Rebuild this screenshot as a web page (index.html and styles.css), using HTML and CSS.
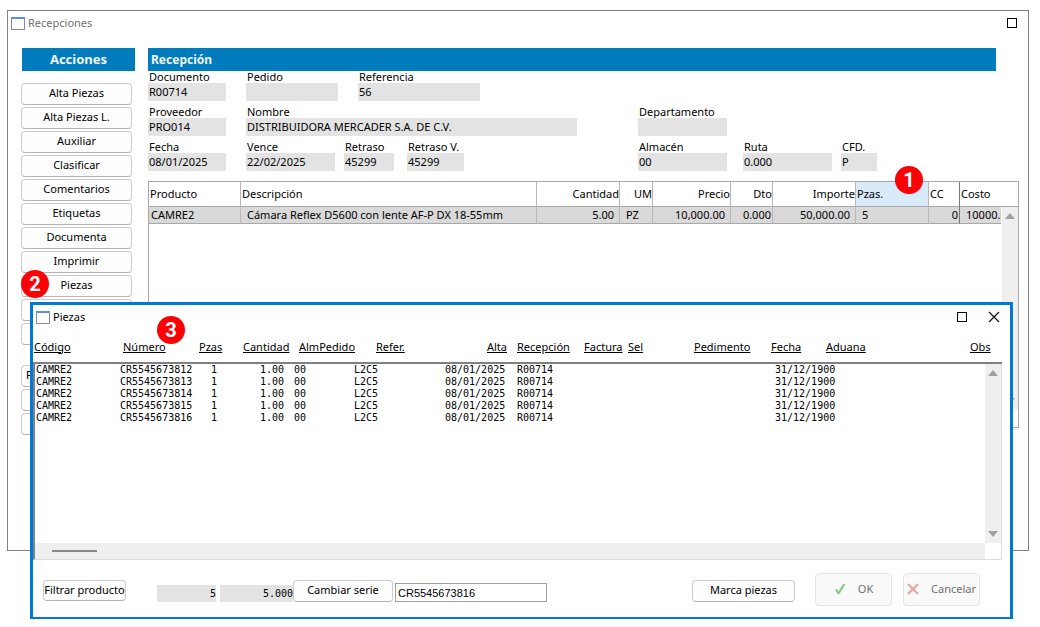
FILE: index.html
```html
<!DOCTYPE html>
<html lang="es">
<head>
<meta charset="utf-8">
<title>Recepciones</title>
<link rel="stylesheet" href="styles.css">
</head>
<body>
<div class="desktop">
  <main class="window">
    <header class="titlebar">
      <span class="app-icon"></span>
      <h1 class="title">Recepciones</h1>
      <button class="maximize" type="button" aria-label="Maximizar"></button>
    </header>
    <div class="window-body">
      <nav class="actions">
        <h2 class="band band-center">Acciones</h2>
        <div class="action-list">
          <button class="button" type="button">Alta Piezas</button>
          <button class="button" type="button">Alta Piezas L.</button>
          <button class="button" type="button">Auxiliar</button>
          <button class="button" type="button">Clasificar</button>
          <button class="button" type="button">Comentarios</button>
          <button class="button" type="button">Etiquetas</button>
          <button class="button" type="button">Documenta</button>
          <button class="button" type="button">Imprimir</button>
          <button class="button" type="button">Piezas</button>
          <button class="button" type="button"></button>
          <button class="button" type="button"></button>
        </div>
        <div class="action-list action-list-more">
          <button class="button button-start" type="button">F</button>
          <button class="button" type="button"></button>
          <button class="button" type="button"></button>
        </div>
      </nav>
      <section class="reception">
        <h2 class="band">Recepción</h2>
        <form class="form">
          <div class="group">
            <div class="row row-document">
              <label class="field">Documento<input readonly value="R00714"></label>
              <label class="field">Pedido<input readonly value=""></label>
              <label class="field">Referencia<input readonly value="56"></label>
            </div>
            <div class="row row-supplier">
              <label class="field">Proveedor<input readonly value="PRO014"></label>
              <label class="field">Nombre<input readonly value="DISTRIBUIDORA MERCADER S.A. DE C.V."></label>
            </div>
            <div class="row row-dates">
              <label class="field">Fecha<input readonly value="08/01/2025"></label>
              <label class="field">Vence<input readonly value="22/02/2025"></label>
              <label class="field">Retraso<input readonly value="45299"></label>
              <label class="field">Retraso V.<input readonly value="45299"></label>
            </div>
          </div>
          <div class="group group-end">
            <div class="row row-department">
              <label class="field">Departamento<input readonly value=""></label>
            </div>
            <div class="row row-store">
              <label class="field">Almacén<input readonly value="00"></label>
              <label class="field">Ruta<input readonly value="0.000"></label>
              <label class="field">CFD.<input readonly value="P"></label>
            </div>
          </div>
        </form>
        <div class="lines">
          <table class="lines-table">
            <colgroup>
              <col class="c-product"><col><col class="c-qty"><col class="c-um"><col class="c-price">
              <col class="c-dto"><col class="c-amount"><col class="c-pieces"><col class="c-cc"><col class="c-cost">
            </colgroup>
            <thead>
              <tr><th>Producto</th><th>Descripción</th><th class="num">Cantidad</th><th class="num">UM</th><th class="num">Precio</th><th class="num">Dto</th><th class="num">Importe</th><th class="active">Pzas.</th><th class="dark">CC</th><th>Costo</th></tr>
            </thead>
            <tbody>
              <tr><td>CAMRE2</td><td class="indent">Cámara Reflex D5600 con lente AF-P DX 18-55mm</td><td class="num">5.00</td><td class="indent">PZ</td><td class="num">10,000.00</td><td class="num tight">0.000</td><td class="num">50,000.00</td><td class="indent">5</td><td class="num tight dark">0</td><td class="indent">10000.00</td></tr>
            </tbody>
          </table>
          <div class="lines-scroll"><span class="arrow arrow-up"></span><span class="arrow arrow-down"></span></div>
        </div>
      </section>
    </div>
    <span class="badge badge-one">1</span>
    <span class="badge badge-two">2</span>
  </main>

  <section class="dialog" role="dialog" aria-labelledby="dialog-title">
    <header class="titlebar dialog-titlebar">
      <span class="app-icon"></span>
      <h2 class="title" id="dialog-title">Piezas</h2>
      <button class="maximize" type="button" aria-label="Maximizar"></button>
      <button class="close" type="button" aria-label="Cerrar">
        <svg width="12" height="12" viewBox="0 0 12 12"><path d="M1 1L11 11M11 1L1 11" fill="none" stroke="#111" stroke-width="1.2"/></svg>
      </button>
    </header>
    <div class="pieces">
      <table class="pieces-table">
        <colgroup>
          <col class="p-code"><col class="p-number"><col class="p-pieces"><col class="p-qty"><col class="p-store">
          <col class="p-ref"><col class="p-date"><col class="p-reception"><col class="p-invoice"><col class="p-sel">
          <col class="p-pedimento"><col class="p-fecha"><col><col class="p-obs">
        </colgroup>
        <thead>
          <tr><th>Código</th><th class="inset">Número</th><th>Pzas</th><th>Cantidad</th><th class="inset-more">AlmPedido</th><th class="inset-far">Refer.</th><th class="num">Alta</th><th class="inset-wide">Recepción</th><th>Factura</th><th>Sel</th><th>Pedimento</th><th>Fecha</th><th>Aduana</th><th>Obs</th></tr>
        </thead>
        <tbody>
          <tr><td class="inset">CAMRE2</td><td>CR5545673812</td><td class="one">1</td><td class="num">1.00</td><td>00</td><td>L2C5</td><td class="date">08/01/2025</td><td class="inset-wide">R00714</td><td></td><td></td><td></td><td class="inset-more">31/12/1900</td><td></td><td></td></tr>
          <tr><td class="inset">CAMRE2</td><td>CR5545673813</td><td class="one">1</td><td class="num">1.00</td><td>00</td><td>L2C5</td><td class="date">08/01/2025</td><td class="inset-wide">R00714</td><td></td><td></td><td></td><td class="inset-more">31/12/1900</td><td></td><td></td></tr>
          <tr><td class="inset">CAMRE2</td><td>CR5545673814</td><td class="one">1</td><td class="num">1.00</td><td>00</td><td>L2C5</td><td class="date">08/01/2025</td><td class="inset-wide">R00714</td><td></td><td></td><td></td><td class="inset-more">31/12/1900</td><td></td><td></td></tr>
          <tr><td class="inset">CAMRE2</td><td>CR5545673815</td><td class="one">1</td><td class="num">1.00</td><td>00</td><td>L2C5</td><td class="date">08/01/2025</td><td class="inset-wide">R00714</td><td></td><td></td><td></td><td class="inset-more">31/12/1900</td><td></td><td></td></tr>
          <tr><td class="inset">CAMRE2</td><td>CR5545673816</td><td class="one">1</td><td class="num">1.00</td><td>00</td><td>L2C5</td><td class="date">08/01/2025</td><td class="inset-wide">R00714</td><td></td><td></td><td></td><td class="inset-more">31/12/1900</td><td></td><td></td></tr>
        </tbody>
      </table>
      <div class="pieces-vscroll"><span class="arrow arrow-up"></span><span class="arrow arrow-down"></span></div>
      <div class="pieces-hscroll"><span class="thumb"></span></div>
      <div class="pieces-corner"></div>
    </div>
    <footer class="dialog-footer">
      <button class="button filter" type="button">Filtrar producto</button>
      <div class="totals">
        <input class="total total-count" readonly aria-label="Piezas" value="5">
        <input class="total total-qty" readonly aria-label="Cantidad" value="5.000">
        <button class="button change" type="button">Cambiar serie</button>
        <input class="serial" aria-label="Serie" value="CR5545673816">
      </div>
      <div class="confirm">
        <button class="button mark" type="button">Marca piezas</button>
        <button class="button large ok" type="button" disabled>
          <svg width="12" height="12" viewBox="0 0 12 12"><path d="M1 6.500L3 6L4.500 8.500L9 1L11.500 1L5.500 11L3.500 11Z" fill="#86cb86"/></svg>
          OK
        </button>
        <button class="button large cancel" type="button" disabled>
          <svg width="12" height="12" viewBox="0 0 12 12"><path d="M1 1L11 11M11 1L1 11" fill="none" stroke="#e9a3a3" stroke-width="2"/></svg>
          Cancelar
        </button>
      </div>
    </footer>
    <span class="badge badge-three">3</span>
  </section>
</div>
</body>
</html>
```
FILE: styles.css
```css
* { box-sizing: border-box; }

body {
  margin: 0;
  background: #fff;
  color: #000;
  font: 11px/14px "Noto Sans", "Open Sans", sans-serif;
}

h1, h2 { margin: 0; font-size: 11px; font-weight: 400; }

button, input { font: inherit; color: inherit; }

.desktop { position: relative; padding: 10px 11px 76px 7px; }

.window {
  position: relative;
  border: 1px solid #828282;
  padding-bottom: 115px;
}

.titlebar {
  display: flex;
  align-items: center;
  height: 24px;
  padding: 0 11px 0 3px;
}

.title { flex: 1; margin-left: 3px; color: #707070; }

.app-icon {
  width: 14px;
  height: 13px;
  border: 1px solid #8686b4;
  border-top: 2px solid #5b8fe0;
  background: #fffffa;
}

.maximize {
  width: 10px;
  height: 10px;
  padding: 0;
  border: 1px solid #000;
  background: #fff;
}

.close { display: flex; padding: 0; border: 0; background: none; }

.window-body { display: flex; gap: 13px; padding: 13px 9px 0 14px; }

.actions { flex: none; width: 113px; }

.band {
  height: 23px;
  margin-right: 23px;
  padding-left: 3px;
  background: #007cbc;
  color: #f0f6fa;
  font-size: 12px;
  font-weight: 700;
  line-height: 23px;
}

.band-center { margin-right: 0; padding: 0; font-size: 13px; text-align: center; }

.action-list {
  display: grid;
  gap: 2px;
  margin: 12px 3px 0 -1px;
}

.action-list-more { margin-top: 20px; }

.button {
  height: 22px;
  padding: 0 0 2px;
  border: 1px solid #ccc;
  border-bottom-color: #b4b4b4;
  border-radius: 4px;
  background: #fdfdfd;
  line-height: 18px;
  text-align: center;
  white-space: nowrap;
}

.button-start { padding-left: 4px; text-align: left; }

.reception { flex: 1; min-width: 0; }

.form { display: flex; }

.group { flex: none; width: 490px; }
.group-end { width: 240px; padding-top: 35px; }

.row { display: grid; height: 35px; }
.row-document { grid-template-columns: 78px 92px 122px; gap: 20px; }
.row-supplier { grid-template-columns: 78px 331px; gap: 20px; }
.row-dates { grid-template-columns: 98px 98px 63px 57px; }
.row-department { grid-template-columns: 89px; }
.row-store { grid-template-columns: 105px 98px 36px; }

.field { display: flex; flex-direction: column; line-height: 12px; text-indent: 1px; white-space: nowrap; }

.field input {
  width: 100%;
  height: 18px;
  padding: 0 0 1px;
  border: 0;
  background: #e3e3e3;
  text-indent: 1px;
}

.row-dates .field:nth-child(1) input { width: 78px; }
.row-dates .field:nth-child(2) input { width: 89px; }
.row-dates .field:nth-child(3) input { width: 50px; }
.row-store .field:nth-child(-n+2) input { width: 89px; }

.lines {
  position: relative;
  height: 247px;
  margin-top: 5px;
  border: 1px solid #a8a8a8;
}

table { width: 100%; table-layout: fixed; border-collapse: separate; border-spacing: 0; }
th { font-weight: 400; text-align: left; }
th, td { padding: 0; white-space: nowrap; }
th.num, td.num { text-align: right; }

.lines-table th { height: 25px; border-bottom: 1px solid #a8a8a8; border-right: 1px solid #b8b8b8; padding-left: 1px; }
.lines-table td { height: 17px; border-bottom: 1px solid #a8a8a8; border-right: 1px solid #b8b8b8; padding-left: 2px; background: #d9d9d9; overflow: hidden; }
.lines-table td.num { padding-right: 5px; }
.lines-table td.tight { padding-right: 1px; }
.lines-table td.indent { padding-left: 6px; }
.lines-table .active { background: #d9eaf8; }
.lines-table .dark { border-right-color: #777; }
.lines-table tr > :last-child { border-right: 0; }

.c-product { width: 92px; }
.c-qty { width: 83px; }
.c-um { width: 33px; }
.c-price { width: 78px; }
.c-dto { width: 42px; }
.c-amount { width: 83px; }
.c-pieces { width: 73px; }
.c-cc { width: 31px; }
.c-cost { width: 58px; }

.arrow { width: 0; height: 0; border: 5px solid transparent; }
.arrow-up { border-top: 0; border-bottom: 6px solid #a0a0a0; }
.arrow-down { border-bottom: 0; border-top: 6px solid #a0a0a0; }

.lines-scroll, .pieces-vscroll {
  display: flex;
  flex-direction: column;
  align-items: center;
  justify-content: space-between;
  padding: 6px 0;
  background: #efefef;
}

.lines-scroll { position: absolute; top: 25px; right: 0; bottom: 17px; width: 17px; border-left: 1px solid #fff; }

.dialog {
  position: absolute;
  top: 302px;
  left: 30px;
  right: 27px;
  border: 3px solid #0078d7;
  border-bottom-width: 2px;
  background: #fff;
}

.dialog-titlebar { padding-right: 10px; }
.dialog-titlebar .title { color: #000; }
.dialog-titlebar .close { margin-left: 21px; }

.pieces {
  display: grid;
  grid-template-columns: 1fr 17px;
  grid-template-rows: 214px 17px;
  margin-right: 8px;
}

.pieces::before {
  content: "";
  grid-column: 1;
  grid-row: 1;
  width: 2px;
  margin-top: 33px;
  background: #808080;
}

.pieces-table { grid-column: 1 / 3; grid-row: 1; align-self: start; }

.pieces-table th { height: 35px; padding-top: 2px; padding-left: 1px; border-bottom: 2px solid #808080; text-decoration: underline; }
.pieces-table td { height: 12px; font: 10px/12px "DejaVu Sans Mono", monospace; color: #000; }
.pieces-table .inset { padding-left: 3px; }
.pieces-table .inset-more { padding-left: 5px; }
.pieces-table .inset-far { padding-left: 22px; }
.pieces-table .inset-wide { padding-left: 10px; }
.pieces-table .one { padding-left: 13px; }
.pieces-table td.num { padding-right: 10px; }
.pieces-table .date { padding-left: 3px; }
.p-code { width: 87px; }
.p-number { width: 78px; }
.p-pieces { width: 44px; }
.p-qty { width: 52px; }
.p-store { width: 60px; }
.p-ref { width: 88px; }
.p-date { width: 65px; }
.p-reception { width: 76px; }
.p-invoice { width: 44px; }
.p-sel { width: 66px; }
.p-pedimento { width: 77px; }
.p-fecha { width: 55px; }
.p-obs { width: 33px; }

.pieces-vscroll { grid-column: 2; grid-row: 1; margin-top: 35px; border-right: 1px solid #ddd; }

.pieces-hscroll {
  grid-column: 1;
  grid-row: 2;
  display: flex;
  align-items: center;
  padding-left: 17px;
  border-bottom: 1px solid #ddd;
  border-left: 2px solid #808080;
  background: #efefef;
}

.pieces-corner { grid-column: 2; grid-row: 2; border: solid #ddd; border-width: 0 1px 1px 0; }

.thumb { width: 45px; height: 2px; background: #888; }

.dialog-footer { display: flex; align-items: flex-start; height: 57px; padding: 13px 30px 0 10px; }

.filter { width: 83px; height: 21px; margin-top: 7px; }
.totals { display: flex; align-items: flex-end; height: 29px; margin-left: 31px; }
.total { height: 17px; padding: 0; border: 0; background: #e3e3e3; font: 10px/16px "DejaVu Sans Mono", monospace; text-align: right; }
.total-count { width: 59px; margin-right: 4px; }
.total-qty { width: 73px; }
.change { width: 100px; margin-right: 2px; }
.serial { width: 152px; height: 19px; padding: 0 2px; border: 1px solid #a0a0a0; background: #fff; font: 11px/16px "Liberation Sans", sans-serif; }

.confirm { display: flex; align-items: flex-start; margin-left: auto; }
.mark { width: 103px; margin-top: 7px; }
.large { display: flex; align-items: center; justify-content: center; height: 33px; border-color: #e4e4e4; background: #f9f9f9; color: #707070; }
.ok { width: 77px; margin-left: 20px; gap: 12px; }
.cancel { width: 77px; margin-left: 11px; gap: 12px; }

.badge {
  position: absolute;
  width: 28px;
  height: 28px;
  border-radius: 50%;
  background: #fc0006;
  color: #fff;
  font: 700 20px/28px Roboto, sans-serif;
  text-align: center;
}

.badge-one { top: 155px; right: 105px; }
.badge-two { top: 259px; left: 13px; }
.badge-three { top: 11px; left: 124px; }
```
